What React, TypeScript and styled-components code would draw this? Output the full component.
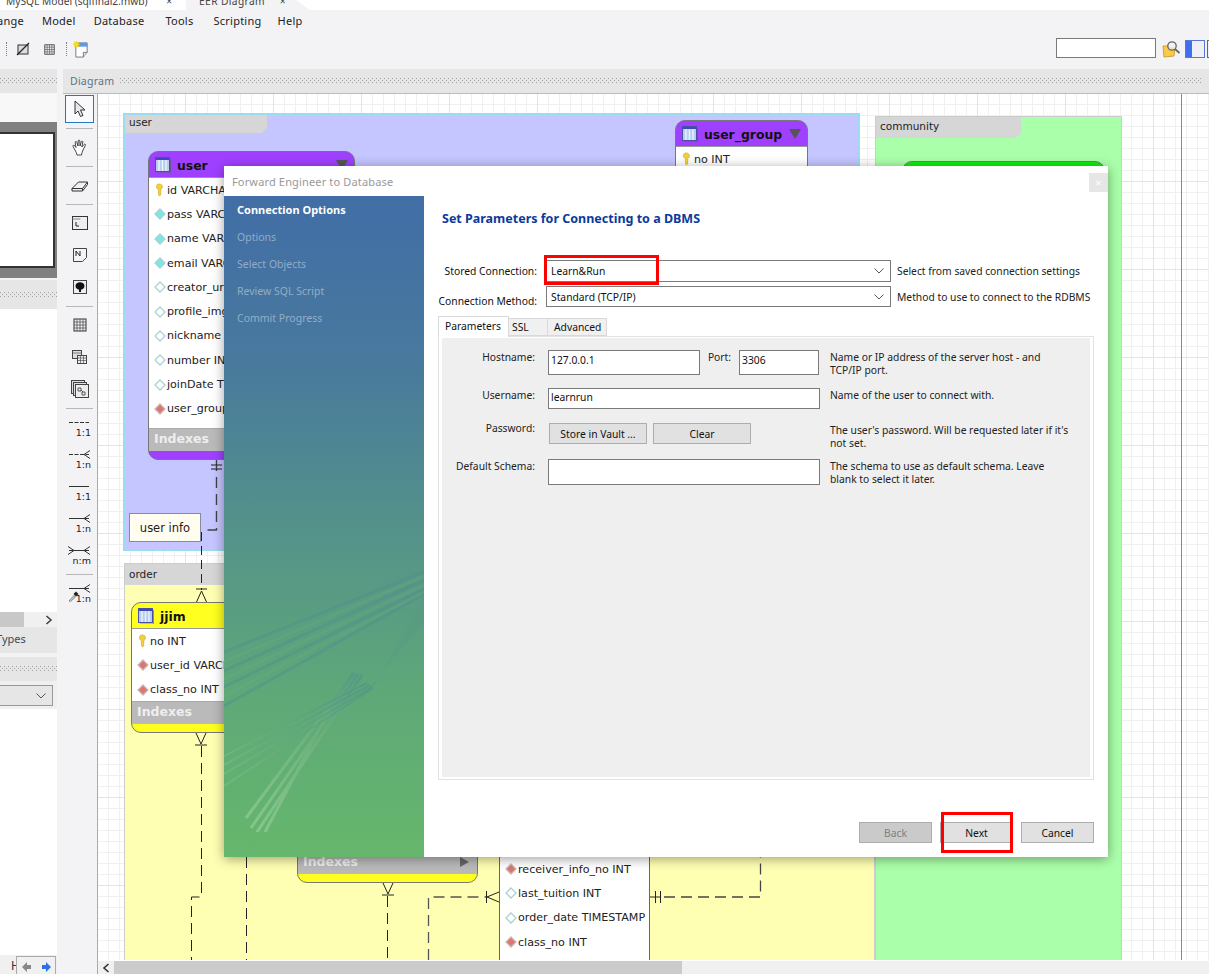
import React from 'react'
import styled, { createGlobalStyle } from 'styled-components'

const UI_FONT = '"Noto Sans", "Liberation Sans", sans-serif'
const DIAGRAM_FONT = '"DejaVu Sans", "Liberation Sans", sans-serif'

const GlobalStyle = createGlobalStyle`
  html, body {
    margin: 0;
    padding: 0;
    background: #f3f3f6;
  }
  * {
    box-sizing: border-box;
  }
`

const Page = styled.div`
  position: relative;
  width: 1209px;
  height: 974px;
  overflow: hidden;
  display: flex;
  flex-direction: column;
  background: #f3f3f6;
  font-family: ${UI_FONT};
  font-size: 10.3px;
  color: #111;
`

/* ---------- top bars ---------- */

const TabStrip = styled.div`
  height: 10px;
  flex: none;
  display: flex;
  align-items: flex-end;
  background: #fff;
  overflow: hidden;
`

const DocTab = styled.div<{ $active?: boolean; $w: number }>`
  width: ${p => p.$w}px;
  height: 10px;
  flex: none;
  display: flex;
  align-items: flex-end;
  justify-content: space-between;
  padding: 0 ${p => (p.$active ? 24 : 14)}px 0 ${p => (p.$active ? 13 : 6)}px;
  background: ${p => (p.$active ? '#f3f3f6' : '#fff')};
  clip-path: ${p => (p.$active ? 'polygon(0 0, 110px 0, 100% 100%, 0 100%)' : 'none')};
  font-size: 10.2px;
  letter-spacing: ${p => (p.$active ? 0.4 : 0)}px;
  line-height: 18px;
  color: #444;
  white-space: nowrap;
`

const MenuBar = styled.div`
  height: 21px;
  margin-bottom: 2px;
  flex: none;
  display: flex;
  align-items: center;
  gap: 18px;
  font-size: 11px;
  letter-spacing: 0.25px;
  color: #222;
`

const MenuItem = styled.span<{ $ml?: number }>`
  margin-left: ${p => p.$ml ?? 0}px;
`

const ToolBar = styled.div`
  height: 30px;
  flex: none;
  display: flex;
  align-items: center;
  padding: 2px 0 0 6px;
`

const ToolSep = styled.div`
  width: 1px;
  height: 14px;
  border-left: 1px dotted #6b7fa8;
`

const ToolBarSpacer = styled.div`
  flex: 1;
`

const ToolGap = styled.span<{ $w: number }>`
  width: ${p => p.$w}px;
  flex: none;
`

const SearchInput = styled.div`
  width: 100px;
  height: 20px;
  margin-top: -2px;
  border: 1px solid #7a7a7a;
  background: #fff;
`

const Workspace = styled.div`
  height: 911px;
  padding-top: 6px;
  flex: none;
  display: flex;
  gap: 6px;
  background: #f3f3f6;
`

/* ---------- left column ---------- */

const SideColumn = styled.div`
  width: 57px;
  flex: none;
  display: flex;
  flex-direction: column;
`

const Dots = styled.div`
  flex: 1;
  height: 6px;
  background-image:
    radial-gradient(circle at 0.5px 0.5px, #a0a0a0 0.7px, transparent 0.8px),
    radial-gradient(circle at 0.5px 0.5px, #a0a0a0 0.7px, transparent 0.8px);
  background-size: 4px 4px;
  background-position: 0 0, 2px 2px;
`

const PanelHeader = styled.div<{ $h: number; $pad?: number }>`
  height: ${p => p.$h}px;
  flex: none;
  display: flex;
  align-items: center;
  gap: 6px;
  padding: 0 ${p => p.$pad ?? 0}px;
  background: #e6e6e6;
`

const PanelTitle = styled.span`
  color: #5d7486;
  font-size: 10.6px;
  letter-spacing: 0.2px;
`

const Blank = styled.div<{ $h: number; $bg?: string }>`
  height: ${p => p.$h}px;
  flex: none;
  background: ${p => p.$bg ?? '#fff'};
`

const Navigator = styled.div`
  height: 156px;
  flex: none;
  padding: 10px 2px 10px 0;
  background: #808080;
`

const NavigatorPage = styled.div`
  height: 100%;
  background: #fff;
  border: 2px solid #333;
  border-left: none;
`

const MiniScroll = styled.div`
  height: 15px;
  flex: none;
  display: flex;
  align-items: center;
  background: #f0f0f0;
`

const MiniThumb = styled.div`
  width: 24px;
  height: 100%;
  background: #c8c8c8;
  margin-right: 21px;
`

const TypesTab = styled.div`
  height: 26px;
  flex: none;
  padding-bottom: 3px;
  display: flex;
  align-items: center;
  background: #e6e6e6;
  color: #3a4a5c;
  font-size: 11px;
  overflow: hidden;
`

const TypesLabel = styled.span`
  margin-left: -4px;
`

const SelectRow = styled.div`
  height: 28px;
  flex: none;
  padding: 4px 4px 4px 0;
  background: #f0f0f0;
`

const MiniSelect = styled.div`
  height: 21px;
  display: flex;
  align-items: center;
  justify-content: flex-end;
  padding-right: 5px;
  background: #e6e6e6;
  border: 1px solid #999;
  border-left: none;
`

const NavRow = styled.div`
  flex: 1;
  display: flex;
  align-items: stretch;
  padding: 1px 1px 0 11px;
  background: #f0f0f0;
  color: #333;
`

const NavLetter = styled.span`
  width: 5px;
  overflow: hidden;
  font-size: 12px;
  line-height: 20px;
`

const NavArrows = styled.div`
  flex: 1;
  display: flex;
  align-items: center;
  justify-content: space-around;
  border: 1px solid #aaa;
  border-bottom: none;
`

/* ---------- diagram panel ---------- */

const DiagramColumn = styled.div`
  flex: 1;
  min-width: 0;
  display: flex;
  flex-direction: column;
`

const DiagramBody = styled.div`
  flex: 1;
  min-height: 0;
  display: flex;
  border-top: 1px solid #bbb;
`

const ToolBox = styled.div`
  width: 35px;
  flex: none;
  display: flex;
  flex-direction: column;
  border-right: 1px solid #aaa;
  padding-right: 1px;
`

const ToolGroup = styled.div`
  display: flex;
  flex-direction: column;
  padding: 2px 0 3px;
`

const Tool = styled.div<{ $h?: number; $selected?: boolean }>`
  height: ${p => p.$h ?? 32}px;
  margin: ${p => (p.$selected ? '1px 2px 5px' : '0')};
  display: flex;
  align-items: center;
  justify-content: center;
  border: ${p => (p.$selected ? '1px solid #1f78c8' : 'none')};
  background: ${p => (p.$selected ? '#fafafc' : 'transparent')};
`

const ToolRule = styled.div`
  height: 1px;
  flex: none;
  margin: 0 3px;
  background: #b8b8b8;
`

const RelationTool = styled.div`
  height: 32px;
  position: relative;
  padding: 7px 5px 0 5px;
  display: flex;
  flex-direction: column;
`

const RelationLabel = styled.span`
  align-self: flex-end;
  font-family: ${DIAGRAM_FONT};
  font-size: 9.5px;
  line-height: 12px;
  color: #222;
`

const Dropper = styled.svg`
  position: absolute;
  left: 5px;
  top: 14px;
`

const CanvasColumn = styled.div`
  flex: 1;
  min-width: 0;
  display: flex;
  flex-direction: column;
`

const Canvas = styled.div`
  position: relative;
  flex: 1;
  overflow: hidden;
  background-color: #fff;
  background-image:
    linear-gradient(#e4e4e4 1px, transparent 1px),
    linear-gradient(90deg, #e4e4e4 1px, transparent 1px),
    linear-gradient(#f0f0f0 1px, transparent 1px),
    linear-gradient(90deg, #f0f0f0 1px, transparent 1px);
  background-size: 88px 88px, 88px 88px, 11px 11px, 11px 11px;
  background-position: 87px 87px, 87px 87px, 10px 10px, 10px 10px;
`

const HScroll = styled.div`
  height: 14px;
  flex: none;
  display: flex;
  align-items: stretch;
  background: #f0f0f0;
  border-top: 1px solid #fff;
`

const HScrollButton = styled.div`
  width: 16px;
  display: flex;
  align-items: center;
  justify-content: center;
`

const HScrollThumb = styled.div`
  width: 568px;
  background: #cbcbcb;
`

const PageEdge = styled.div`
  position: absolute;
  left: 1083px;
  top: 0;
  bottom: 0;
  width: 1px;
  background: #8a8a8a;
`

const Layer = styled.div<{ $x: number; $y: number; $w: number; $h: number; $bg: string; $border: string }>`
  position: absolute;
  left: ${p => p.$x}px;
  top: ${p => p.$y}px;
  width: ${p => p.$w}px;
  height: ${p => p.$h}px;
  background: ${p => p.$bg};
  border: ${p => p.$border};
`

const LayerTab = styled.div<{ $w: number; $h: number; $pb: number }>`
  width: ${p => p.$w}px;
  height: ${p => p.$h}px;
  padding: 0 4px ${p => p.$pb}px;
  display: flex;
  align-items: center;
  background: #d6d6d6;
  clip-path: polygon(0 0, 100% 0, 100% calc(100% - 5px), calc(100% - 5px) 100%, 0 100%);
  font-family: ${DIAGRAM_FONT};
  font-size: 10.5px;
  color: #222;
`

const Note = styled.div`
  position: absolute;
  left: 31px;
  top: 419px;
  width: 72px;
  height: 29px;
  display: flex;
  align-items: center;
  justify-content: center;
  background: #fffdf0;
  border: 1px solid #8a8a9a;
  font-family: ${DIAGRAM_FONT};
  font-size: 11.5px;
  color: #222;
`

const Table = styled.div<{ $x: number; $y: number; $w: number; $h?: number; $color: string }>`
  position: absolute;
  left: ${p => p.$x}px;
  top: ${p => p.$y}px;
  width: ${p => p.$w}px;
  height: ${p => (p.$h ? `${p.$h}px` : 'auto')};
  display: flex;
  flex-direction: column;
  overflow: hidden;
  background: ${p => p.$color};
  border: 1px solid #777;
  border-radius: 10px;
  font-family: ${DIAGRAM_FONT};
`

const TableHead = styled.div`
  height: 25px;
  flex: none;
  display: flex;
  align-items: center;
  gap: 6px;
  padding: 1px 6px 0;
  font-size: 12.4px;
  font-weight: 700;
  color: #111;
`

const HeadName = styled.span`
  flex: 1;
`

const TableBody = styled.div`
  flex: 1;
  min-height: 0;
  overflow: hidden;
  background: #fff;
  border-top: 1px solid #999;
`

const Column = styled.div`
  height: 24.3px;
  display: flex;
  align-items: center;
  gap: 0;
  padding-left: 4px;
  font-size: 11.1px;
  color: #222;
  white-space: nowrap;
`

const IndexBar = styled.div`
  height: 23px;
  flex: none;
  display: flex;
  align-items: center;
  justify-content: space-between;
  padding: 0 8px 3px 5px;
  background: #bababa;
  color: #eee;
  font-size: 12.5px;
  font-weight: 700;
  border-top: 1px solid #aaa;
`

const TableFoot = styled.div`
  height: 8px;
  flex: none;
`

const BareTable = styled.div`
  position: absolute;
  left: 401px;
  top: 763px;
  width: 151px;
  bottom: 0;
  background: #fff;
  border-left: 1px solid #666;
  border-right: 1px solid #666;
  font-family: ${DIAGRAM_FONT};
`

const Connectors = styled.svg`
  position: absolute;
  left: 0;
  top: 0;
  pointer-events: none;
`

/* ---------- wizard dialog ---------- */

const Dialog = styled.div`
  position: absolute;
  left: 224px;
  top: 166px;
  width: 884px;
  height: 691px;
  display: flex;
  flex-direction: column;
  background: #fff;
  box-shadow: 0 2px 11px rgba(0, 0, 0, 0.38);
`

const DialogTitle = styled.div`
  height: 30px;
  flex: none;
  position: relative;
  display: flex;
  align-items: center;
  padding-left: 8px;
  color: #999;
  font-size: 11px;
  letter-spacing: 0.15px;
`

const CloseButton = styled.div`
  position: absolute;
  right: 0;
  top: 7px;
  width: 19px;
  height: 19px;
  display: flex;
  align-items: center;
  justify-content: center;
  background: #e6e6e6;
  color: #fff;
  font-size: 11px;
`

const DialogBody = styled.div`
  flex: 1;
  min-height: 0;
  display: flex;
`

const Steps = styled.div`
  position: relative;
  width: 200px;
  flex: none;
  padding: 0 13px;
  background: linear-gradient(180deg, #416ea6 0%, #48799d 25%, #54928a 50%, #5ea878 75%, #66b76c 100%);
`

const Step = styled.div<{ $current?: boolean }>`
  position: relative;
  height: 27px;
  display: flex;
  align-items: center;
  font-size: ${p => (p.$current ? 11 : 10.5)}px;
  font-weight: ${p => (p.$current ? 700 : 400)};
  color: ${p => (p.$current ? '#fff' : 'rgba(255, 255, 255, 0.42)')};
`

const StepArt = styled.svg`
  position: absolute;
  left: 0;
  top: 0;
`

const Pane = styled.div`
  flex: 1;
  min-width: 0;
  display: flex;
  flex-direction: column;
  padding: 0 14px;
`

const Heading = styled.div`
  height: 64px;
  flex: none;
  padding: 15px 0 0 4px;
  color: #0b3a9c;
  font-size: 12.5px;
  line-height: 16px;
  font-weight: 700;
`

const ConnRow = styled.div<{ $h: number; $mb: number }>`
  height: ${p => p.$h}px;
  margin-bottom: ${p => p.$mb}px;
  flex: none;
  display: grid;
  grid-template-columns: 99px 345px 1fr;
  column-gap: 9px;
  align-items: center;
`

const ConnLabel = styled.span<{ $drop?: number }>`
  text-align: right;
  white-space: nowrap;
  transform: translateY(${p => p.$drop ?? 0}px);
`

const Hint = styled.span`
  margin-left: -3px;
  white-space: nowrap;
  color: #222;
  font-size: 10.3px;
`

const ComboBox = styled.div`
  height: 100%;
  display: flex;
  align-items: center;
  justify-content: space-between;
  padding: 0 5px 0 4px;
  background: #fff;
  border: 1px solid #7a7a7a;
  white-space: nowrap;
`

const Tabs = styled.div`
  height: 20px;
  flex: none;
  display: flex;
  align-items: flex-end;
`

const TabButton = styled.div<{ $w: number; $pl: number; $active?: boolean }>`
  width: ${p => p.$w}px;
  height: ${p => (p.$active ? 21 : 18)}px;
  margin-bottom: ${p => (p.$active ? -1 : 0)}px;
  padding: 0 0 ${p => (p.$active ? 3 : 0)}px ${p => p.$pl}px;
  display: flex;
  align-items: center;
  background: ${p => (p.$active ? '#fff' : '#f0f0f0')};
  border: 1px solid #d9d9d9;
  border-bottom: ${p => (p.$active ? 'none' : '1px solid #d9d9d9')};
  border-left: ${p => (p.$active ? '1px solid #d9d9d9' : 'none')};
  position: relative;
`

const TabPanel = styled.div`
  height: 444px;
  flex: none;
  padding: 1px 3px 2px;
  background: #fff;
  border: 1px solid #e2e2e2;
`

const FormArea = styled.div`
  height: 100%;
  padding-top: 12px;
  background: #efefef;
`

const FormGrid = styled.div`
  display: grid;
  grid-template-columns: 93px 272px 1fr;
  grid-template-rows: 38px 35px 36px 26px;
  column-gap: 13px;
  align-items: start;
`

const FormLabel = styled.span<{ $lift?: number }>`
  text-align: right;
  white-space: nowrap;
  margin-top: -${p => p.$lift ?? 0}px;
  color: #222;
`

const HostFields = styled.div`
  display: flex;
  align-items: flex-start;
`

const TextBox = styled.div<{ $w?: number; $h: number; $top?: number }>`
  width: ${p => (p.$w ? `${p.$w}px` : '100%')};
  height: ${p => p.$h}px;
  flex: none;
  padding: ${p => p.$top ?? 2}px 0 0 2px;
  background: #fff;
  border: 1px solid #7a7a7a;
  line-height: 15px;
  white-space: nowrap;
`

const PortLabel = styled.span`
  width: 39px;
  flex: none;
  text-align: center;
  color: #222;
`

const PasswordButtons = styled.div`
  display: flex;
  gap: 6px;
  padding-left: 1px;
`

const FormHint = styled.div`
  margin-left: -3px;
  padding-top: 1px;
  font-size: 10.3px;
  line-height: 13px;
  color: #222;
  white-space: nowrap;
`

const SmallButton = styled.div`
  width: 98px;
  height: 21px;
  display: flex;
  align-items: center;
  justify-content: center;
  background: #e1e1e1;
  border: 1px solid #adadad;
`

const Footer = styled.div`
  flex: none;
  display: flex;
  justify-content: flex-end;
  gap: 8px;
  padding-top: 42px;
`

const WizardButton = styled.div<{ $disabled?: boolean }>`
  width: 73px;
  height: 21px;
  display: flex;
  align-items: center;
  justify-content: center;
  background: ${p => (p.$disabled ? '#cacaca' : '#e1e1e1')};
  border: 1px solid #adadad;
  color: ${p => (p.$disabled ? '#808080' : '#111')};
`

const Highlight = styled.div<{ $x: number; $y: number; $w: number; $h: number }>`
  position: absolute;
  left: ${p => p.$x}px;
  top: ${p => p.$y}px;
  width: ${p => p.$w}px;
  height: ${p => p.$h}px;
  border: 3px solid #f00;
`

/* ---------- drawings ---------- */

const Chevron = () => (
  <svg width="12" height="8" viewBox="0 0 12 8">
    <path d="M1.5 1.5 6 6l4.5-4.5" fill="none" stroke="#555" strokeWidth="1" />
  </svg>
)

const Key = () => (
  <svg width="14" height="14" viewBox="0 0 14 14" style={{ flex: 'none' }}>
    <path d="M4.5 1.2c2.3-.8 5 0 5 2.6 0 1.4-1 2.3-1.6 2.8l-.2 5.4-1.2 1-1-1-.3-5.4C4.3 6 3.3 5.2 3.4 3.8c0-1.2.3-2.1 1.1-2.6z" fill="#f3cf3a" stroke="#c79f1d" strokeWidth=".5" />
  </svg>
)

const Diamond = ({ kind }: { kind: 'cyan' | 'empty' | 'red' }) => {
  const fill = kind === 'cyan' ? '#7fe6e6' : kind === 'red' ? '#e07470' : '#fff'
  const stroke = kind === 'red' ? '#c4baba' : '#a9d2d3'
  return (
    <svg width="14" height="14" viewBox="0 0 14 14" style={{ flex: 'none' }}>
      <path d="M7 2l5 5-5 5-5-5z" fill={fill} stroke={stroke} strokeWidth="1.3" />
    </svg>
  )
}

const TableIcon = () => (
  <svg width="16" height="16" viewBox="0 0 16 16" style={{ flex: 'none' }}>
    <rect x=".5" y=".5" width="14" height="14" fill="#b7cdf0" stroke="#4a50a8" />
    <path d="M4 3v11M7.5 3v11M11 3v11" stroke="#eef3fb" strokeWidth="1.4" />
    <rect x="1" y="1" width="13" height="2" fill="#3e49c0" />
    <path d="M15.5 2v14H2" stroke="#555" strokeOpacity=".6" fill="none" />
  </svg>
)

const GridGlyph = ({ size }: { size: number }) => (
  <svg width={size} height={size} viewBox="0 0 14 14">
    <rect x="1" y="1" width="12" height="12" fill="#eee" stroke="#333" />
    <path d="M1 4h12M1 7h12M1 10h12M4 1v12M7 1v12M10 1v12" stroke="#555" strokeWidth=".8" />
  </svg>
)

const Relation = ({ dash, end, start }: { dash?: boolean; end?: boolean; start?: boolean }) => (
  <svg width="22" height="9" viewBox="0 0 22 9" style={{ flex: 'none' }}>
    <path d="M1 4.5h20" stroke="#333" fill="none" strokeDasharray={dash ? '4 1.5' : undefined} />
    {end && <path d="M22 .5 16 4.5l6 4" stroke="#333" fill="none" />}
    {start && <path d="M0 .5l6 4-6 4" stroke="#333" fill="none" />}
  </svg>
)

type ColumnKind = 'key' | 'cyan' | 'empty' | 'red'

const userColumns: [string, ColumnKind][] = [
  ['id VARCHAR(45)', 'key'],
  ['pass VARCHAR(45)', 'cyan'],
  ['name VARCHAR(45)', 'cyan'],
  ['email VARCHAR(45)', 'cyan'],
  ['creator_url VARCHAR', 'empty'],
  ['profile_img VARCHAR', 'empty'],
  ['nickname VARCHAR(45)', 'empty'],
  ['number INT', 'empty'],
  ['joinDate TIMESTAMP', 'empty'],
  ['user_group_no INT', 'red'],
]

const jjimColumns: [string, ColumnKind][] = [
  ['no INT', 'key'],
  ['user_id VARCHAR(45)', 'red'],
  ['class_no INT', 'red'],
]

const orderColumns: [string, ColumnKind][] = [
  ['receiver_info_no INT', 'red'],
  ['last_tuition INT', 'empty'],
  ['order_date TIMESTAMP', 'empty'],
  ['class_no INT', 'red'],
]

const ColumnRow = ({ name, kind }: { name: string; kind: ColumnKind }) => (
  <Column>
    {kind === 'key' ? <Key /> : <Diamond kind={kind} />}
    {name}
  </Column>
)

const IndexArrow = () => (
  <svg width="10" height="10" viewBox="0 0 10 10">
    <path d="M1 0l9 5-9 5z" fill="#666" />
  </svg>
)

const HeadArrow = () => (
  <svg width="12" height="10" viewBox="0 0 12 10" style={{ flex: 'none' }}>
    <path d="M0 0h12L6 10z" fill="#555" />
  </svg>
)

const App = () => (
  <Page>
    <GlobalStyle />
    <TabStrip>
      <DocTab $w={186}>
        <span>MySQL Model (sqlfinal2.mwb)</span>
        <span>×</span>
      </DocTab>
      <DocTab $w={124} $active>
        <span>EER Diagram</span>
        <span>×</span>
      </DocTab>
    </TabStrip>

    <MenuBar>
      <MenuItem $ml={-3}>ange</MenuItem>
      <MenuItem>Model</MenuItem>
      <MenuItem>Database</MenuItem>
      <MenuItem $ml={3}>Tools</MenuItem>
      <MenuItem $ml={2}>Scripting</MenuItem>
      <MenuItem $ml={-2}>Help</MenuItem>
    </MenuBar>

    <ToolBar>
      <ToolSep />
      <ToolGap $w={9} />
      <svg width="14" height="14" viewBox="0 0 14 14">
        <rect x="2" y="3" width="10" height="9" fill="#ddd" stroke="#333" />
        <path d="M1 13 13 1" stroke="#222" strokeWidth="1.2" />
      </svg>
      <ToolGap $w={14} />
      <GridGlyph size={11} />
      <ToolGap $w={11} />
      <ToolSep />
      <ToolGap $w={6} />
      <svg width="17" height="17" viewBox="0 0 18 18">
        <path d="M3 2h12v10l-4 5H3z" fill="#fff" stroke="#777" />
        <rect x="3" y="2" width="12" height="4" fill="#5a9be8" />
        <path d="M15 12h-4v5" fill="#ddd" stroke="#777" />
        <path d="M3.5 0v7M0 3.5h7M1 1l5 5M6 1 1 6" stroke="#f4d93c" strokeWidth="1.4" />
      </svg>
      <ToolBarSpacer />
      <SearchInput />
      <ToolGap $w={6} />
      <svg width="19" height="18" viewBox="0 0 19 18">
        <path d="M1 6h5l1 2h6l-1 8-10 1z" fill="#f6ca4a" stroke="#d6a028" />
        <circle cx="10" cy="6" r="4.2" fill="#eef2f6" fillOpacity=".7" stroke="#666" strokeWidth="1.3" />
        <path d="m13 9 4.5 4" stroke="#666" strokeWidth="1.8" />
      </svg>
      <ToolGap $w={4} />
      <svg width="20" height="18" viewBox="0 0 20 18">
        <rect x=".5" y=".5" width="19" height="17" fill="#eef0f6" stroke="#5b78d0" />
        <rect x="1" y="1" width="6" height="16" fill="#3f6ef0" />
      </svg>
      <ToolGap $w={2} />
      <svg width="2" height="18" viewBox="0 0 2 18">
        <rect x=".5" y=".5" width="4" height="17" fill="#eef0f6" stroke="#666" />
      </svg>
    </ToolBar>

    <Workspace>
      <SideColumn>
        <PanelHeader $h={24}>
          <Dots />
        </PanelHeader>
        <Blank $h={29} $bg="#f8f8f8" />
        <Navigator>
          <NavigatorPage />
        </Navigator>
        <Blank $h={2} $bg="#f3f3f6" />
        <PanelHeader $h={29}>
          <Dots />
        </PanelHeader>
        <Blank $h={303} />
        <MiniScroll>
          <MiniThumb />
          <svg width="8" height="10" viewBox="0 0 8 10">
            <path d="M1.5 1 6 5 1.5 9" fill="none" stroke="#444" strokeWidth="1.6" />
          </svg>
        </MiniScroll>
        <TypesTab>
          <TypesLabel>Types</TypesLabel>
        </TypesTab>
        <Blank $h={4} $bg="#f3f3f6" />
        <PanelHeader $h={24}>
          <Dots />
        </PanelHeader>
        <SelectRow>
          <MiniSelect>
            <Chevron />
          </MiniSelect>
        </SelectRow>
        <Blank $h={246} />
        <NavRow>
          <NavLetter>H</NavLetter>
          <NavArrows>
            <svg width="10" height="12" viewBox="0 0 10 12">
              <path d="M0 6l5-5v3h4v4H5v3z" fill="#888" />
            </svg>
            <svg width="10" height="12" viewBox="0 0 10 12">
              <path d="M10 6 5 1v3H1v4h4v3z" fill="#2f6fe8" />
            </svg>
          </NavArrows>
        </NavRow>
      </SideColumn>

      <DiagramColumn>
        <PanelHeader $h={24} $pad={7}>
          <PanelTitle>Diagram</PanelTitle>
          <Dots />
        </PanelHeader>
        <DiagramBody>
          <ToolBox>
            <Tool $h={28} $selected>
              <svg width="14" height="18" viewBox="0 0 14 18">
                <path d="M2 1v13l3-3 2.5 5.5 2.5-1-2.5-5.500H12z" fill="#e8e8e8" stroke="#333" />
              </svg>
            </Tool>
            <ToolRule />
            <Tool $h={37}>
              <svg width="18" height="18" viewBox="0 0 18 18">
                <path d="M4 11 2 7.5c-.6-1 .8-1.8 1.5-1L5 8.5 4.2 3.500c-.2-1.200 1.300-1.500 1.600-.3L7 7l.2-5c0-1.200 1.600-1.200 1.600 0L9 7l1.300-4.300c.4-1.100 1.800-.7 1.500.4L10.800 8l2.200-2.500c.8-.9 2 .1 1.300 1.100L12 11c-.9 1.500-1 3-1.500 5H6c-.4-2-1-3.600-2-5z" fill="#fff" stroke="#333" strokeWidth=".9" />
              </svg>
            </Tool>
            <ToolRule />
            <Tool $h={37}>
              <svg width="18" height="14" viewBox="0 0 18 14">
                <path d="M1 9.5 7.5 3H16.500l-5 6.500zM1 9.500V12h10.500l5-6.500V3M11.500 9.500V12" fill="#eee" stroke="#333" />
              </svg>
            </Tool>
            <ToolRule />
            <ToolGroup>
              <Tool>
                <svg width="16" height="14" viewBox="0 0 16 14">
                  <rect x=".5" y=".5" width="15" height="13" fill="#eee" stroke="#333" />
                  <path d="M.5 3h8" stroke="#888" />
                  <path d="M4 6v4h3" fill="none" stroke="#222" />
                </svg>
              </Tool>
              <Tool>
                <svg width="14" height="14" viewBox="0 0 14 14">
                  <path d="M.5.5h13v9l-4 4h-9z" fill="#f4f4f4" stroke="#444" />
                  <path d="M3 8V3l4 5V3" fill="none" stroke="#222" />
                </svg>
              </Tool>
              <Tool>
                <svg width="14" height="14" viewBox="0 0 14 14">
                  <rect x=".5" y=".5" width="13" height="13" fill="#eee" stroke="#444" />
                  <ellipse cx="7" cy="6" rx="4.500" ry="3.800" fill="#111" />
                  <rect x="6" y="8" width="2" height="4" fill="#111" />
                </svg>
              </Tool>
            </ToolGroup>
            <ToolRule />
            <ToolGroup>
              <Tool>
                <GridGlyph size={14} />
              </Tool>
              <Tool>
                <svg width="15" height="14" viewBox="0 0 15 14">
                  <rect x=".5" y=".5" width="9" height="8" fill="#ddd" stroke="#444" />
                  <rect x="5.500" y="5.500" width="9" height="8" fill="#eee" stroke="#444" />
                  <path d="M5.500 8h9M5.500 10.500h9M8.500 5.500v8M11.500 5.500v8M.5 3h9" stroke="#555" strokeWidth=".7" />
                </svg>
              </Tool>
              <Tool>
                <svg width="18" height="18" viewBox="0 0 18 18">
                  <rect x=".5" y=".5" width="13" height="13" fill="#ddd" stroke="#444" />
                  <rect x="2.500" y="2.500" width="13" height="13" fill="#ddd" stroke="#444" />
                  <rect x="4.500" y="4.500" width="13" height="13" fill="#eee" stroke="#444" />
                  <path d="M7 8h3v3H7zM11 12h3v3h-3zM10 10l2 2" fill="none" stroke="#333" strokeWidth=".8" />
                </svg>
              </Tool>
            </ToolGroup>
            <ToolRule />
            <ToolGroup>
              <RelationTool>
                <Relation dash />
                <RelationLabel>1:1</RelationLabel>
              </RelationTool>
              <RelationTool>
                <Relation dash end />
                <RelationLabel>1:n</RelationLabel>
              </RelationTool>
              <RelationTool>
                <Relation />
                <RelationLabel>1:1</RelationLabel>
              </RelationTool>
              <RelationTool>
                <Relation end />
                <RelationLabel>1:n</RelationLabel>
              </RelationTool>
              <RelationTool>
                <Relation end start />
                <RelationLabel>n:m</RelationLabel>
              </RelationTool>
            </ToolGroup>
            <ToolRule />
            <ToolGroup>
              <RelationTool>
                <Relation end />
                <RelationLabel>1:n</RelationLabel>
                <Dropper width="11" height="11" viewBox="0 0 11 11">
                  <path d="M1 10 6 4.500 7.500 6 2.500 10.500z" fill="#ccc" stroke="#666" strokeWidth=".7" />
                  <path d="M5.500 3 8 .5 10.500 3 8 5.500z" fill="#222" />
                </Dropper>
              </RelationTool>
            </ToolGroup>
          </ToolBox>

          <CanvasColumn>
            <Canvas>
              <PageEdge />

              <Layer $x={25} $y={19} $w={737} $h={438} $bg="#c5c5ff" $border="2px solid #9adcf2">
                <LayerTab $w={142} $h={18} $pb={5}>user</LayerTab>
              </Layer>
              <Layer $x={777} $y={22} $w={247} $h={850} $bg="#aaffaa" $border="1px solid #ccc">
                <LayerTab $w={145} $h={21} $pb={3}>community</LayerTab>
              </Layer>
              <Layer $x={26} $y={469} $w={751} $h={410} $bg="#ffffb3" $border="1px solid #ccc">
                <LayerTab $w={150} $h={21} $pb={1}>order</LayerTab>
              </Layer>

              <Table $x={50} $y={57} $w={207} $h={309} $color="#a040ff">
                <TableHead>
                  <TableIcon />
                  <HeadName>user</HeadName>
                  <HeadArrow />
                </TableHead>
                <TableBody>
                  {userColumns.map(([name, kind]) => (
                    <ColumnRow key={name} name={name} kind={kind} />
                  ))}
                </TableBody>
                <IndexBar>Indexes</IndexBar>
                <TableFoot />
              </Table>

              <Table $x={577} $y={26} $w={133} $h={120} $color="#a040ff">
                <TableHead>
                  <TableIcon />
                  <HeadName>user_group</HeadName>
                  <HeadArrow />
                </TableHead>
                <TableBody>
                  <ColumnRow name="no INT" kind="key" />
                </TableBody>
              </Table>

              <Table $x={804} $y={67} $w={203} $h={80} $color="#10f010" />

              <Note>user info</Note>

              <Table $x={33} $y={508} $w={210} $h={131} $color="#ffff20">
                <TableHead>
                  <TableIcon />
                  <HeadName>jjim</HeadName>
                </TableHead>
                <TableBody>
                  {jjimColumns.map(([name, kind]) => (
                    <ColumnRow key={name} name={name} kind={kind} />
                  ))}
                </TableBody>
                <IndexBar>Indexes</IndexBar>
                <TableFoot />
              </Table>

              <Table $x={199} $y={731} $w={181} $color="#ffff20">
                <TableHead />
                <IndexBar>
                  Indexes
                  <IndexArrow />
                </IndexBar>
                <TableFoot />
              </Table>

              <BareTable>
                {orderColumns.map(([name, kind]) => (
                  <ColumnRow key={name} name={name} kind={kind} />
                ))}
              </BareTable>

              <Connectors width="1111" height="866" viewBox="98 94 1111 866" fill="none" stroke="#222">
                <path d="M216.5 460V530H204" strokeDasharray="11 6" stroke="#444" strokeWidth="1.4" />
                <path d="M211 465h11M211 469h11" />
                <path d="M201.5 532V590" strokeDasharray="9 5" />
                <path d="M196 589h11M201.5 591l-5 11M201.5 591l5 11" />
                <path d="M196 733l5 11 5-11M195 745h12" />
                <path d="M201.5 746V897H191.5V960" strokeDasharray="11 6" />
                <path d="M246.5 857V960" strokeDasharray="11 6" />
                <path d="M383 883l5 11 5-11M382 895h12" />
                <path d="M387.5 896V960" strokeDasharray="11 6" />
                <path d="M428.5 960V897H486" strokeDasharray="11 6" stroke="#555" strokeWidth="1.3" />
                <path d="M486.5 891v12M499 892l-12 5 12 5" />
                <path d="M650 897h10M655.5 891v12M660.5 891v12" />
                <path d="M664 897H760.5V857" strokeDasharray="11 6" stroke="#444" strokeWidth="1.3" />
              </Connectors>
            </Canvas>
            <HScroll>
              <HScrollButton>
                <svg width="8" height="10" viewBox="0 0 8 10">
                  <path d="M6.5 1 2 5l4.500 4" fill="none" stroke="#333" strokeWidth="1.6" />
                </svg>
              </HScrollButton>
              <HScrollThumb />
            </HScroll>
          </CanvasColumn>
        </DiagramBody>
      </DiagramColumn>
    </Workspace>

    <Dialog>
      <DialogTitle>
        Forward Engineer to Database
        <CloseButton>×</CloseButton>
      </DialogTitle>
      <DialogBody>
        <Steps>
          <StepArt width="200" height="661" viewBox="0 0 200 661" fill="none">
            <defs>
              <linearGradient id="strand" x1="130" y1="477" x2="23" y2="627" gradientUnits="userSpaceOnUse">
                <stop offset="0" stopColor="#4f8f90" stopOpacity=".6" />
                <stop offset=".3" stopColor="#6fb080" stopOpacity=".5" />
                <stop offset="1" stopColor="#a9d8a8" stopOpacity=".5" />
              </linearGradient>
              <linearGradient id="crossing" x1="148" y1="490" x2="0" y2="575" gradientUnits="userSpaceOnUse">
                <stop offset="0" stopColor="#4f9089" stopOpacity=".6" />
                <stop offset=".5" stopColor="#5f9f88" stopOpacity=".5" />
                <stop offset="1" stopColor="#7ac48a" stopOpacity=".45" />
              </linearGradient>
            </defs>
            <path d="M200 427 142 495 150 490 200 400z" fill="#4f8f90" fillOpacity=".12" />
            <path d="M200 376 0 456M200 384 0 475M200 393 0 491M200 398 0 510" stroke="#4f8d92" strokeOpacity=".4" strokeWidth="3" />
            <path d="M200 380 0 466M200 389 0 483M200 396 0 500" stroke="#6ab07e" strokeOpacity=".25" strokeWidth="3" />
            <path d="M130 477 22 622M134 478 27 632M138 479 33 636M116 494 41 636" stroke="url(#strand)" strokeWidth="3" />
            <path d="M143 487 0 560M146 489 0 569M148 491 0 578M149 492 0 590" stroke="url(#crossing)" strokeWidth="2" />
          </StepArt>
          <Step $current>Connection Options</Step>
          <Step>Options</Step>
          <Step>Select Objects</Step>
          <Step>Review SQL Script</Step>
          <Step>Commit Progress</Step>
        </Steps>
        <Pane>
          <Heading>Set Parameters for Connecting to a DBMS</Heading>
          <ConnRow $h={22} $mb={4}>
            <ConnLabel>Stored Connection:</ConnLabel>
            <ComboBox>
              Learn&amp;Run
              <Chevron />
            </ComboBox>
            <Hint>Select from saved connection settings</Hint>
          </ConnRow>
          <ConnRow $h={21} $mb={9}>
            <ConnLabel $drop={4}>Connection Method:</ConnLabel>
            <ComboBox>
              Standard (TCP/IP)
              <Chevron />
            </ComboBox>
            <Hint>Method to use to connect to the RDBMS</Hint>
          </ConnRow>
          <Tabs>
            <TabButton $w={71} $pl={6} $active>Parameters</TabButton>
            <TabButton $w={39} $pl={3}>SSL</TabButton>
            <TabButton $w={59} $pl={6}>Advanced</TabButton>
          </Tabs>
          <TabPanel>
            <FormArea>
              <FormGrid>
                <FormLabel>Hostname:</FormLabel>
                <HostFields>
                  <TextBox $w={152} $h={25}>127.0.0.1</TextBox>
                  <PortLabel>Port:</PortLabel>
                  <TextBox $w={80} $h={25}>3306</TextBox>
                </HostFields>
                <FormHint>
                  Name or IP address of the server host - and
                  <br />
                  TCP/IP port.
                </FormHint>

                <FormLabel>Username:</FormLabel>
                <TextBox $h={21} $top={1}>learnrun</TextBox>
                <FormHint>Name of the user to connect with.</FormHint>

                <FormLabel $lift={2}>Password:</FormLabel>
                <PasswordButtons>
                  <SmallButton>Store in Vault ...</SmallButton>
                  <SmallButton>Clear</SmallButton>
                </PasswordButtons>
                <FormHint>
                  The user's password. Will be requested later if it's
                  <br />
                  not set.
                </FormHint>

                <FormLabel>Default Schema:</FormLabel>
                <TextBox $h={26} />
                <FormHint>
                  The schema to use as default schema. Leave
                  <br />
                  blank to select it later.
                </FormHint>
              </FormGrid>
            </FormArea>
          </TabPanel>
          <Footer>
            <WizardButton $disabled>Back</WizardButton>
            <WizardButton>Next</WizardButton>
            <WizardButton>Cancel</WizardButton>
          </Footer>
        </Pane>
      </DialogBody>
      <Highlight $x={320} $y={89} $w={115} $h={30} />
      <Highlight $x={717} $y={646} $w={72} $h={41} />
    </Dialog>
  </Page>
)

export default App
